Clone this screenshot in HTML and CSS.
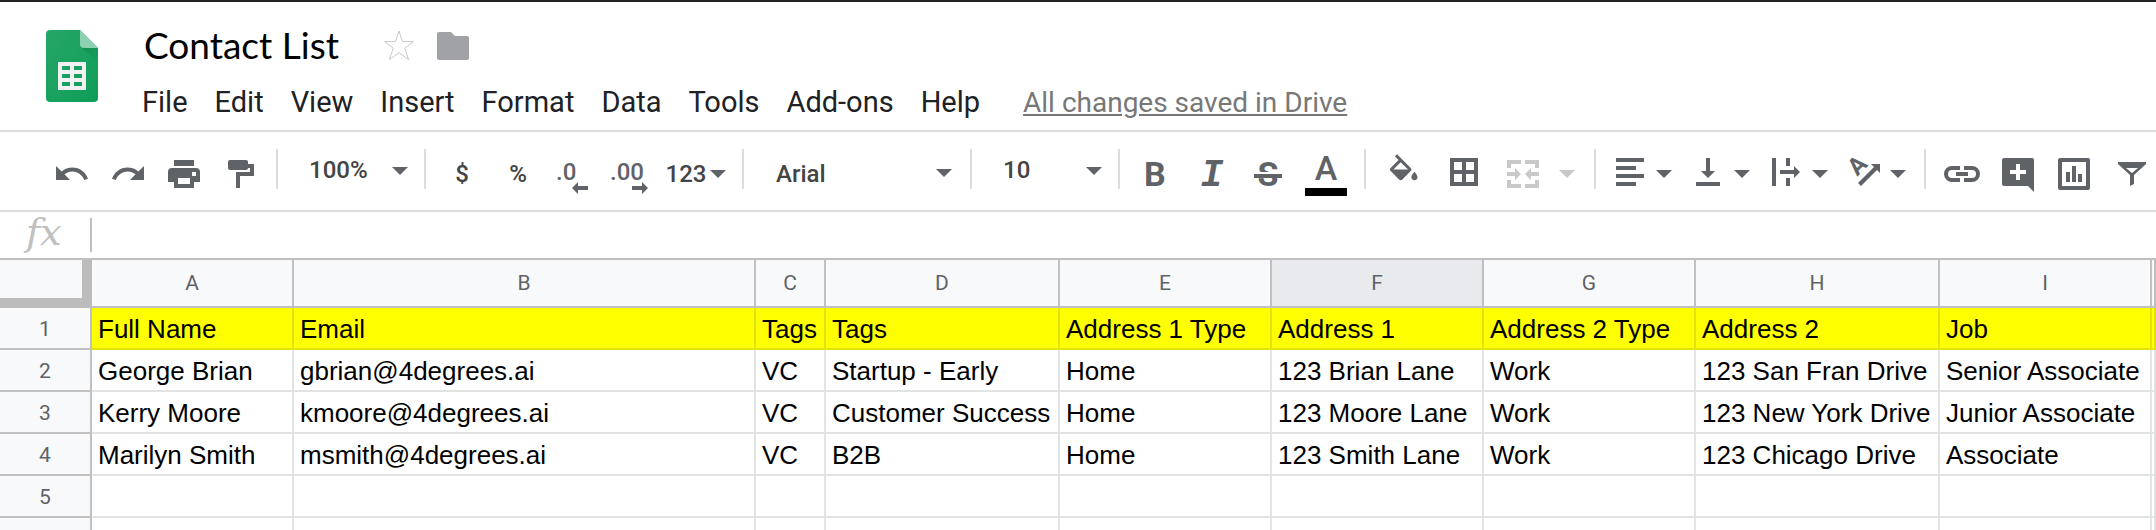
FILE: index.html
```html
<!DOCTYPE html>
<html lang="en">

<head>
    <meta charset="UTF-8" />
    <meta name="viewport" content="width=device-width, initial-scale=1.0" />
    <title>Contact List</title>
    <link rel="stylesheet" href="styles.css">
</head>

<body>
    <!-- Title and menus -->
    <header class="header">
        <svg class="logo" viewBox="0 0 52 72" aria-hidden="true">
            <defs>
                <linearGradient id="sheetGreen" x1="0" y1="0" x2="1" y2="1">
                    <stop offset="0" stop-color="#26a668" />
                    <stop offset="1" stop-color="#0f9d58" />
                </linearGradient>
                <linearGradient id="foldShadow" x1="0" y1="0" x2="1" y2="1">
                    <stop offset="0" stop-color="#0b7a45" stop-opacity=".5" />
                    <stop offset="1" stop-color="#0b7a45" stop-opacity="0" />
                </linearGradient>
            </defs>
            <path fill="url(#sheetGreen)" d="M4 0h30l18 18v50a4 4 0 0 1-4 4H4a4 4 0 0 1-4-4V4a4 4 0 0 1 4-4z" />
            <path fill="url(#foldShadow)" d="M35 17l17 16V18z" />
            <path fill="#8ed1b1" d="M34 0v14a4 4 0 0 0 4 4h14z" />
            <path fill="#f1f1f1" fill-rule="evenodd" d="M12 32h28v28H12zM16 36v4h8v-4zM28 36v4h8v-4zM16 44v4h8v-4zM28 44v4h8v-4zM16 52v4h8v-4zM28 52v4h8v-4z" />
        </svg>
        <div class="header-main">
            <div class="title-row">
                <h1 class="doc-title">Contact List</h1>
                <button class="title-btn" aria-label="Star">
                    <svg width="32" height="32" viewBox="0 0 32 32">
                        <path fill="none" stroke="#c8c9cc" d="M16 2l3.5 10.600H30.500L21.800 19.200 25.500 30.500 16 23.600 6.500 30.500 10.200 19.200 1.500 12.600H12.500z" />
                    </svg>
                </button>
                <button class="title-btn" aria-label="Move to folder">
                    <svg width="32" height="32" viewBox="0 0 32 32">
                        <path fill="#a1a2a6" d="M2 3h12l4 4h12a2 2 0 0 1 2 2v20a2 2 0 0 1-2 2H2a2 2 0 0 1-2-2V5a2 2 0 0 1 2-2z" />
                    </svg>
                </button>
            </div>
            <nav class="menu">
                <button>File</button>
                <button>Edit</button>
                <button>View</button>
                <button>Insert</button>
                <button>Format</button>
                <button>Data</button>
                <button>Tools</button>
                <button>Add-ons</button>
                <button>Help</button>
                <a class="saved" href="#">All changes saved in Drive</a>
            </nav>
        </div>
    </header>

    <!-- Toolbar -->
    <div class="toolbar" role="toolbar">
        <button class="tool" aria-label="Undo">
            <svg class="icon" viewBox="0 0 36 36"><path transform="translate(-1.100 -1) scale(1.560)" d="M12.500 8c-2.650 0-5.050.99-6.900 2.600L2 7v9h9l-3.620-3.620c1.390-1.160 3.160-1.880 5.120-1.880 3.540 0 6.550 2.310 7.600 5.500l2.370-.78C21.080 11.030 17.150 8 12.500 8z" /></svg>
        </button>
        <button class="tool" aria-label="Redo">
            <svg class="icon" viewBox="0 0 36 36"><path transform="translate(37.100 -1) scale(-1.560 1.560)" d="M12.500 8c-2.650 0-5.050.99-6.900 2.600L2 7v9h9l-3.620-3.620c1.390-1.160 3.160-1.880 5.120-1.880 3.540 0 6.550 2.310 7.600 5.500l2.370-.78C21.080 11.030 17.150 8 12.500 8z" /></svg>
        </button>
        <button class="tool" aria-label="Print">
            <svg class="icon" viewBox="0 0 36 36"><path fill-rule="evenodd" d="M8 4h20v6H8zM6 12h24a4 4 0 0 1 4 4v10h-6v6H8v-6H2V16a4 4 0 0 1 4-4zM12 22v6h12v-6zM26 16v4h4v-4z" /></svg>
        </button>
        <button class="tool" aria-label="Paint format">
            <svg class="icon" viewBox="0 0 36 36"><rect x="6" y="4" width="20" height="10" rx="2" /><path d="M26 8h6v12H18v12h-4V16h14v-4h-2z" /></svg>
        </button>
        <span class="sep"></span>
        <span class="drop drop-raised">
            <select aria-label="Zoom"><option>100%</option></select>
            <svg class="caret" viewBox="0 0 16 8"><path d="M0 0h16L8 8z" /></svg>
        </span>
        <span class="sep"></span>
        <button class="tool">$</button>
        <button class="tool">%</button>
        <button class="tool" aria-label="Decrease decimal places">
            <svg class="icon" viewBox="0 0 36 36"><text x="0" y="24">.0</text><path d="M16 32l6-6v4h10v4H22v4z" /></svg>
        </button>
        <button class="tool" aria-label="Increase decimal places">
            <svg class="icon" viewBox="0 0 36 36"><text x="-2" y="24">.00</text><path d="M36 32l-6-6v4H20v4h10v4z" /></svg>
        </button>
        <button class="tool tool-formats">123<svg class="caret" viewBox="0 0 16 8"><path d="M0 0h16L8 8z" /></svg></button>
        <span class="sep"></span>
        <span class="drop drop-font">
            <select aria-label="Font"><option>Arial</option></select>
            <svg class="caret" viewBox="0 0 16 8"><path d="M0 0h16L8 8z" /></svg>
        </span>
        <span class="sep"></span>
        <span class="drop drop-raised">
            <select aria-label="Font size"><option>10</option></select>
            <svg class="caret" viewBox="0 0 16 8"><path d="M0 0h16L8 8z" /></svg>
        </span>
        <span class="sep"></span>
        <button class="tool" aria-label="Bold">
            <svg class="icon" viewBox="0 0 36 36"><text class="glyph-bold" x="6" y="30">B</text></svg>
        </button>
        <button class="tool" aria-label="Italic">
            <svg class="icon" viewBox="0 0 36 36"><text class="glyph-italic" x="18" y="30" text-anchor="middle">I</text></svg>
        </button>
        <button class="tool" aria-label="Strikethrough">
            <svg class="icon" viewBox="0 0 36 36"><text class="glyph-bold" x="18" y="30" text-anchor="middle">S</text><path fill="#fff" d="M4 16h28v2H4z" /><path d="M4 18h28v4H4z" /></svg>
        </button>
        <button class="tool tool-wide" aria-label="Text color">
            <svg class="icon" viewBox="0 0 36 36"><text class="glyph-color" x="18" y="24" text-anchor="middle">A</text><path fill="#000" d="M-3 32h42v8H-3z" /></svg>
        </button>
        <span class="sep"></span>
        <button class="tool tool-wide" aria-label="Fill color">
            <svg class="icon" viewBox="0 0 36 36"><path transform="translate(-.6 -1.800) scale(1.530)" d="M16.560 8.940L7.620 0 6.210 1.410l2.380 2.380-5.150 5.150c-.59.59-.59 1.540 0 2.120l5.500 5.500c.29.29.68.44 1.060.44s.77-.15 1.060-.44l5.500-5.500c.59-.58.59-1.530 0-2.120zM5.210 10L10 5.210 14.790 10H5.210zM19 11.500s-2 2.170-2 3.500c0 1.100.9 2 2 2s2-.9 2-2c0-1.330-2-3.500-2-3.500z" /></svg>
        </button>
        <button class="tool tool-wide" aria-label="Borders">
            <svg class="icon" viewBox="0 0 36 36"><path fill-rule="evenodd" d="M4 2h28v28H4zM8 6v8h8V6zM20 6v8h8V6zM8 18v8h8v-8zM20 18v8h8v-8z" /></svg>
        </button>
        <button class="tool tool-merge" aria-label="Merge cells" disabled>
            <svg class="icon" viewBox="0 0 36 36"><path d="M2 12V4h14v4H6v4zM20 4h14v8h-4V8H20zM2 24h4v4h10v4H2zM30 24h4v8H20v-4h10zM2 16h8v-4l6 6-6 6v-4H2zM34 16h-8v-4l-6 6 6 6v-4h8z" /></svg>
            <svg class="caret" viewBox="0 0 16 8"><path d="M0 0h16L8 8z" /></svg>
        </button>
        <span class="sep"></span>
        <button class="tool tool-menu" aria-label="Horizontal align">
            <svg class="icon" viewBox="0 0 36 36"><path d="M4 2h28v4H4zM4 10h20v4H4zM4 18h28v4H4zM4 26h20v4H4z" /></svg>
            <svg class="caret" viewBox="0 0 16 8"><path d="M0 0h16L8 8z" /></svg>
        </button>
        <button class="tool tool-menu" aria-label="Vertical align">
            <svg class="icon" viewBox="0 0 36 36"><path d="M16 2h4v13h5l-7 7-7-7h5zM6 26h24v4H6z" /></svg>
            <svg class="caret" viewBox="0 0 16 8"><path d="M0 0h16L8 8z" /></svg>
        </button>
        <button class="tool tool-menu" aria-label="Text wrapping">
            <svg class="icon" viewBox="0 0 36 36"><path d="M4 2h4v28H4zM18 2h4v8h-4zM18 22h4v8h-4zM12 14h14v-4l6 6-6 6v-4H12z" /></svg>
            <svg class="caret" viewBox="0 0 16 8"><path d="M0 0h16L8 8z" /></svg>
        </button>
        <button class="tool tool-menu" aria-label="Text rotation">
            <svg class="icon" viewBox="0 0 36 36"><text class="glyph-rotate" transform="translate(17 15) rotate(-45)" text-anchor="middle">A</text><path d="M25 8h9v9l-3-3-16 16-3-3 16-16z" /></svg>
            <svg class="caret" viewBox="0 0 16 8"><path d="M0 0h16L8 8z" /></svg>
        </button>
        <span class="sep"></span>
        <button class="tool" aria-label="Insert link">
            <svg class="icon" viewBox="0 0 36 36"><path fill="none" stroke="currentColor" stroke-width="4" d="M16 12H8a6 6 0 0 0 0 12h8M20 12h8a6 6 0 0 1 0 12h-8M12 18h12" /></svg>
        </button>
        <button class="tool" aria-label="Insert comment">
            <svg class="icon" viewBox="0 0 36 36"><path fill-rule="evenodd" d="M4 2h28a2 2 0 0 1 2 2v32l-6-6H4a2 2 0 0 1-2-2V4a2 2 0 0 1 2-2zM16 8v6h-6v4h6v6h4v-6h6v-4h-6V8z" /></svg>
        </button>
        <button class="tool" aria-label="Insert chart">
            <svg class="icon" viewBox="0 0 36 36"><path fill-rule="evenodd" d="M4 2h28a2 2 0 0 1 2 2v28a2 2 0 0 1-2 2H4a2 2 0 0 1-2-2V4a2 2 0 0 1 2-2zM6 6v24h24V6z" /><path d="M10 16h4v10h-4zM16 10h4v16h-4zM22 18h4v8h-4z" /></svg>
        </button>
        <button class="tool" aria-label="Create a filter">
            <svg class="icon" viewBox="0 0 36 36"><path fill-rule="evenodd" d="M6 6h28v2L22 19v9l-4 2V19L6 8zM14 12l6 5 6-5z" /></svg>
        </button>
    </div>

    <!-- Formula bar -->
    <div class="formula-bar">
        <label class="fx" for="formula">fx</label>
        <input id="formula" type="text" autocomplete="off" />
    </div>

    <!-- Sheet -->
    <main class="sheet">
        <table class="grid">
            <colgroup>
                <col class="w-row">
                <col class="w-name">
                <col class="w-email">
                <col class="w-tag">
                <col class="w-tags">
                <col class="w-std">
                <col class="w-std">
                <col class="w-std">
                <col class="w-address">
                <col class="w-std">
                <col>
            </colgroup>
            <thead>
                <tr>
                    <th class="corner"></th>
                    <th>A</th>
                    <th>B</th>
                    <th>C</th>
                    <th>D</th>
                    <th>E</th>
                    <th class="selected">F</th>
                    <th>G</th>
                    <th>H</th>
                    <th>I</th>
                    <th></th>
                </tr>
            </thead>
            <tbody>
                <tr class="highlight">
                    <th>1</th>
                    <td>Full Name</td>
                    <td>Email</td>
                    <td>Tags</td>
                    <td>Tags</td>
                    <td>Address 1 Type</td>
                    <td>Address 1</td>
                    <td>Address 2 Type</td>
                    <td>Address 2</td>
                    <td>Job</td>
                    <td></td>
                </tr>
                <tr>
                    <th>2</th>
                    <td>George Brian</td>
                    <td>gbrian@4degrees.ai</td>
                    <td>VC</td>
                    <td>Startup - Early</td>
                    <td>Home</td>
                    <td>123 Brian Lane</td>
                    <td>Work</td>
                    <td>123 San Fran Drive</td>
                    <td>Senior Associate</td>
                    <td></td>
                </tr>
                <tr>
                    <th>3</th>
                    <td>Kerry Moore</td>
                    <td>kmoore@4degrees.ai</td>
                    <td>VC</td>
                    <td>Customer Success</td>
                    <td>Home</td>
                    <td>123 Moore Lane</td>
                    <td>Work</td>
                    <td>123 New York Drive</td>
                    <td>Junior Associate</td>
                    <td></td>
                </tr>
                <tr>
                    <th>4</th>
                    <td>Marilyn Smith</td>
                    <td>msmith@4degrees.ai</td>
                    <td>VC</td>
                    <td>B2B</td>
                    <td>Home</td>
                    <td>123 Smith Lane</td>
                    <td>Work</td>
                    <td>123 Chicago Drive</td>
                    <td>Associate</td>
                    <td></td>
                </tr>
                <tr>
                    <th>5</th>
                    <td></td><td></td><td></td><td></td><td></td><td></td><td></td><td></td><td></td><td></td>
                </tr>
                <tr>
                    <th></th>
                    <td></td><td></td><td></td><td></td><td></td><td></td><td></td><td></td><td></td><td></td>
                </tr>
            </tbody>
        </table>
    </main>
</body>

</html>
```

FILE: styles.css
```css
* {
    box-sizing: border-box;
}

body {
    font-family: Roboto, Arial, sans-serif;
    margin: 0;
    height: 100vh;
    display: flex;
    flex-direction: column;
    overflow: hidden;
    background: #fff;
    border-top: 2px solid #232123;
}

button,
select,
input {
    font: inherit;
    color: inherit;
    background: none;
    border: none;
    margin: 0;
    padding: 0;
}

button {
    cursor: pointer;
}

/* Header */
.header {
    display: flex;
    flex-shrink: 0;
    padding: 20px 46px 2px;
    border-bottom: 2px solid #dadce0;
}

.logo {
    width: 52px;
    height: 72px;
    margin-top: 8px;
    flex-shrink: 0;
}

.header-main {
    padding-left: 44px;
    white-space: nowrap;
}

.title-row {
    display: flex;
    align-items: center;
    height: 46px;
    padding-left: 2px;
}

.doc-title {
    font-family: Lato, sans-serif;
    font-size: 37px;
    font-weight: 400;
    line-height: 46px;
    margin: 0 44px 0 0;
    color: #000;
}

.title-btn {
    display: flex;
    margin-right: 22px;
}

.menu {
    display: flex;
    align-items: center;
    gap: 27px;
    height: 60px;
    padding-top: 8px;
    font-size: 29px;
    color: #202124;
}

.saved {
    margin-left: 16px;
    font-size: 28px;
    color: #777;
}

/* Toolbar */
.toolbar {
    display: flex;
    flex-shrink: 0;
    align-items: center;
    height: 80px;
    padding: 0 0 4px 44px;
    border-bottom: 2px solid #dadce0;
    font-size: 24px;
    font-weight: 500;
    color: #444;
}

.tool {
    display: flex;
    flex-shrink: 0;
    align-items: center;
    justify-content: center;
    width: 56px;
    height: 48px;
    padding-top: 10px;
}

.tool-wide {
    width: 60px;
}

.tool-formats {
    width: 76px;
    gap: 4px;
}

.tool-menu {
    width: 78px;
    gap: 8px;
    padding-right: 2px;
}

.tool-merge {
    width: 92px;
    gap: 18px;
    opacity: 0.35;
}

.icon {
    width: 36px;
    height: 36px;
    flex-shrink: 0;
    overflow: visible;
    fill: #5f6368;
    color: #5f6368;
}

.caret {
    width: 16px;
    height: 8px;
    flex-shrink: 0;
    fill: #5f6368;
}

.glyph-bold {
    font-size: 34px;
    font-weight: 700;
}

.glyph-italic {
    font-family: "Liberation Mono", monospace;
    font-size: 38px;
    font-weight: 700;
    font-style: italic;
}

.glyph-color {
    font-size: 34px;
}

.glyph-rotate {
    font-size: 24px;
    font-weight: 700;
}

.sep {
    flex-shrink: 0;
    width: 2px;
    height: 40px;
    margin: 0 8px;
    background: #dadce0;
}

.drop {
    position: relative;
    flex-shrink: 0;
    width: 130px;
    height: 48px;
}

.drop select {
    appearance: none;
    width: 100%;
    height: 100%;
    padding: 9px 24px 0;
}

.drop .caret {
    position: absolute;
    right: 10px;
    top: 24px;
    pointer-events: none;
}

.drop-raised select {
    padding: 2px 23px 0;
}

.drop-raised .caret {
    right: 8px;
    top: 22px;
}

.drop-font {
    width: 210px;
}

/* Formula bar */
.formula-bar {
    display: flex;
    flex-shrink: 0;
    align-items: center;
    height: 46px;
}

.fx {
    width: 90px;
    padding: 0 0 6px 26px;
    font-family: "DejaVu Serif", serif;
    font-size: 38px;
    font-style: italic;
    line-height: 34px;
    color: #c0c0c0;
}

.formula-bar input {
    flex: 1;
    height: 34px;
    padding: 0 8px;
    border-left: 2px solid #c0c0c0;
    outline: none;
}

/* Sheet */
.sheet {
    flex: 1;
    overflow: hidden;
    border-top: 2px solid #c0c0c0;
}

.grid {
    width: 100%;
    table-layout: fixed;
    border-collapse: separate;
    border-spacing: 0;
}

.grid th,
.grid td {
    height: 42px;
    padding: 0;
    border-right: 2px solid #e2e3e3;
    border-bottom: 2px solid #e2e3e3;
    white-space: nowrap;
    overflow: hidden;
}

.grid td {
    padding: 2px 0 0 6px;
    font-family: "Liberation Sans", Arial, sans-serif;
    font-size: 26px;
    line-height: 30px;
    color: #000;
}

.grid th {
    background: #f8f9fa;
    border-color: #c0c0c0;
    font-size: 21px;
    font-weight: 400;
    color: #5f6368;
}

.grid tbody th {
    padding-top: 2px;
}

.grid thead th {
    height: 48px;
}

.grid .selected {
    background: #e8eaed;
}

.grid .corner {
    border-right: 10px solid #bcbcbc;
    border-bottom: 10px solid #bcbcbc;
}

.highlight td {
    background: #ff0;
    border-color: #e2e30e;
}

.w-row {
    width: 92px;
}

.w-name {
    width: 202px;
}

.w-email {
    width: 462px;
}

.w-tag {
    width: 70px;
}

.w-tags {
    width: 234px;
}

.w-std {
    width: 212px;
}

.w-address {
    width: 244px;
}
```
